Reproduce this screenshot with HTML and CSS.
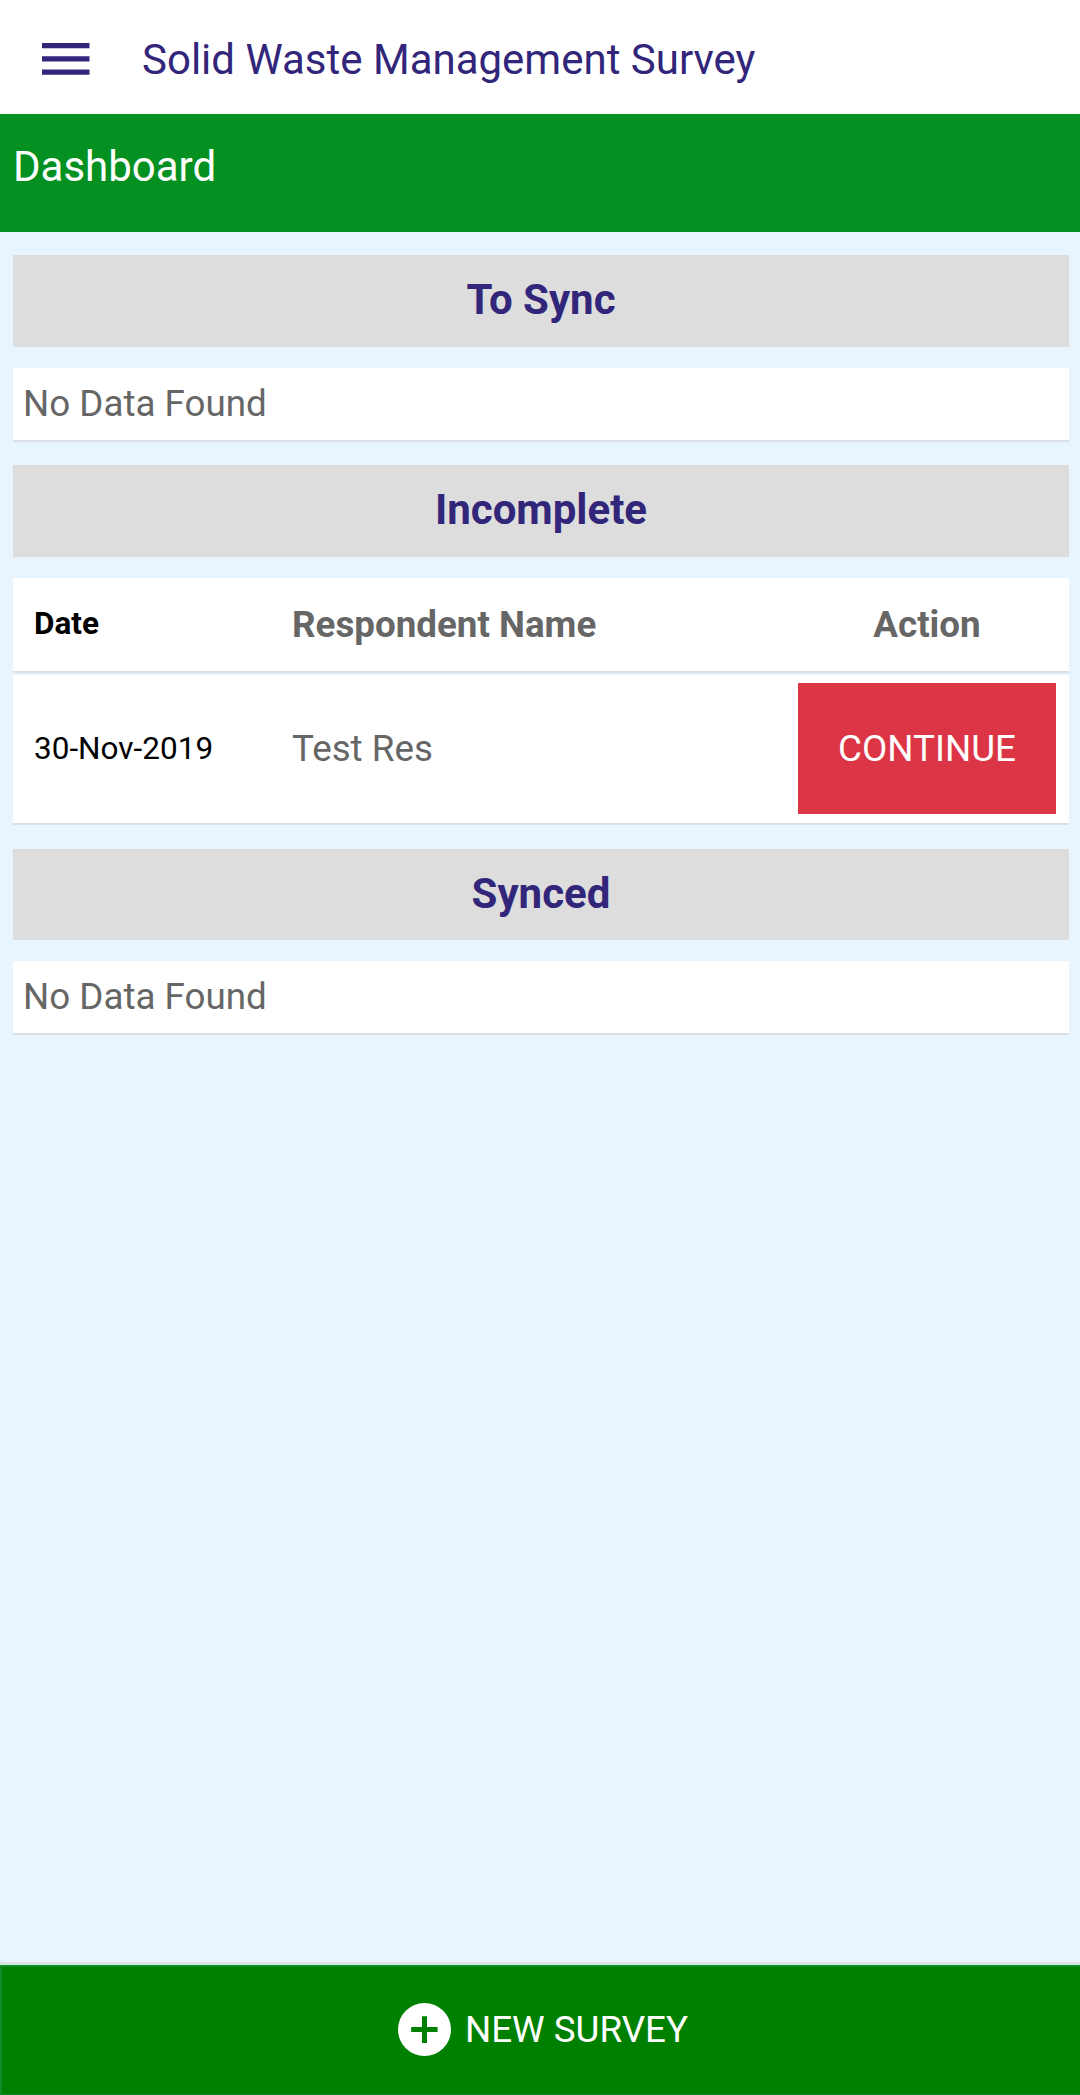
FILE: index.html
```html
<!DOCTYPE html>
<html lang="en">
<head>
    <meta charset="UTF-8">
    <meta name="viewport" content="width=device-width, initial-scale=1.0">
    <title>Solid Waste Management Survey</title>
    <link rel="stylesheet" href="styles.css">
</head>
<body>
    <header class="toolbar">
        <button type="button" class="menu-button" aria-label="Menu">
            <svg width="48" height="32" viewBox="0 0 48 32">
                <path d="M0 0h47.5v5.3H0zM0 13.2h47.5v5.3H0zM0 26.4h47.5v5.3H0z" fill="#32267a"/>
            </svg>
        </button>
        <h1>Solid Waste Management Survey</h1>
    </header>
    <div class="page-title">Dashboard</div>

    <main class="content">
        <section>
            <h2>To Sync</h2>
            <div class="empty">No Data Found</div>
        </section>

        <section>
            <h2>Incomplete</h2>
            <div class="row row-head">
                <span class="date">Date</span>
                <span class="name">Respondent Name</span>
                <span class="action">Action</span>
            </div>
            <div class="row row-item">
                <span class="date">30-Nov-2019</span>
                <span class="name">Test Res</span>
                <button type="button" class="continue">CONTINUE</button>
            </div>
        </section>

        <section>
            <h2 class="synced">Synced</h2>
            <div class="empty">No Data Found</div>
        </section>
    </main>

    <footer class="footer">
        <button type="button" class="new-survey">
            <svg width="53" height="53" viewBox="0 0 53 53">
                <circle cx="26.5" cy="26.5" r="26.5" fill="#fff"/>
                <path d="M13.2 24h10.8V13.2h5V24h10.6v5H29v11h-5V29H13.2z" fill="#008000"/>
            </svg>
            <span>NEW SURVEY</span>
        </button>
    </footer>
</body>
</html>
```
FILE: styles.css
```css
* {
    box-sizing: border-box;
}
body {
    margin: 0;
    min-height: 100vh;
    display: flex;
    flex-direction: column;
    background-color: #e8f5fe;
    font-family: Roboto, sans-serif;
    font-size: 36.75px;
    color: #666;
}
button {
    border: 0;
    padding: 0;
    background: none;
    font: inherit;
}
.toolbar {
    height: 114px;
    padding: 0 42px 0 42px;
    display: flex;
    align-items: center;
    background-color: white;
}
.menu-button {
    display: flex;
    margin: 3px 52px 0 0;
}
.toolbar h1 {
    margin: 5px 0 0;
    font-size: 42px;
    font-weight: normal;
    color: #32267a;
}
.page-title {
    height: 118px;
    padding: 28px 13px 0;
    background-color: #049122;
    color: white;
    font-size: 42px;
    line-height: 50px;
}
.content {
    flex: 1;
    padding: 23px 11px 0 13px;
}
section {
    margin-bottom: 23px;
}
section h2 {
    height: 92px;
    margin: 0 0 21px;
    padding-bottom: 3px;
    background-color: #ddd;
    color: #32267a;
    font-size: 42px;
    line-height: 89px;
    text-align: center;
}
section .synced {
    height: 91px;
    margin-top: 24px;
}
.empty {
    height: 74px;
    padding: 0 10px;
    background-color: white;
    border-bottom: 2px solid #dae0e5;
    line-height: 71px;
}
.row {
    display: grid;
    grid-template-columns: 258px 1fr 258px;
    align-items: center;
    padding: 0 13px 0 21px;
    background-color: white;
    border-bottom: 2px solid #dae0e5;
}
.row-head {
    height: 95px;
    margin-bottom: 2px;
    font-weight: bold;
}
.row-head .date {
    padding-bottom: 2px;
}
.row-item {
    height: 150px;
    padding-bottom: 1px;
}
.date {
    color: black;
    font-size: 31.5px;
}
.action {
    text-align: center;
}
.continue {
    height: 131px;
    background-color: #dc3545;
    color: white;
}
.footer {
    height: 133px;
    border-top: 2px solid #dee2e6;
    padding-top: 1px;
    background-color: #c8f0d8;
}
.new-survey {
    width: 100%;
    height: 130px;
    padding: 0 0 3px 4px;
    display: flex;
    justify-content: center;
    align-items: center;
    gap: 14px;
    border: solid #128a28;
    border-width: 2px 0 1px 2px;
    background-color: #008000;
    color: white;
}
```
